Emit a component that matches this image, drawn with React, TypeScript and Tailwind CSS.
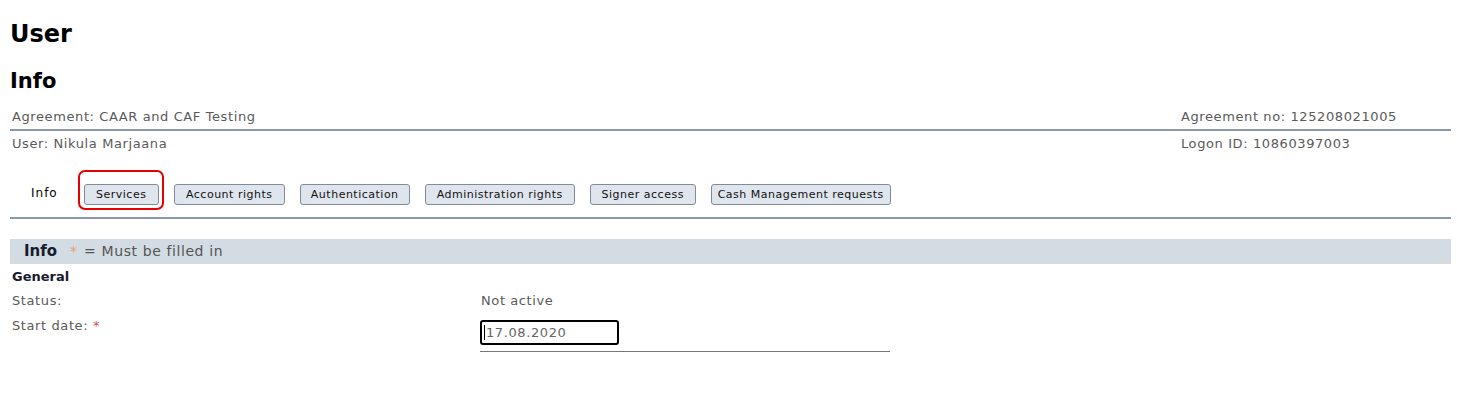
import React from "react";

const tabs = [
  { label: "Services", w: "w-[75px]" },
  { label: "Account rights", w: "w-[111px]" },
  { label: "Authentication", w: "w-[110px]" },
  { label: "Administration rights", w: "w-[150px]" },
  { label: "Signer access", w: "w-[106px]" },
  { label: "Cash Management requests", w: "w-[180px]" },
];

const App: React.FC = () => {
  return (
    <div className="w-[1457px] h-[398px] bg-white font-['DejaVu_Sans',Verdana,sans-serif] text-[#333]">
      <div className="pl-[10px] pr-[6px] pt-[19px]">
        <h1 className="text-[24px] font-bold text-black leading-[30px]">User</h1>
        <h2 className="mt-[19px] text-[21px] font-bold text-black leading-[26px]">Info</h2>

        {/* agreement rows */}
        <div className="mt-[15px] flex justify-between border-b-2 border-[#8a9aab] pb-[4px] pl-[2px] text-[13px] tracking-[0.6px] text-[#5a5a5a] leading-[16px]">
          <span>Agreement: CAAR and CAF Testing</span>
          <span className="w-[270px]">Agreement no: 125208021005</span>
        </div>
        <div className="mt-[5px] flex justify-between pl-[2px] text-[13px] tracking-[0.6px] text-[#5a5a5a] leading-[16px]">
          <span>User: Nikula Marjaana</span>
          <span className="w-[270px]">Logon ID: 10860397003</span>
        </div>

        {/* tabs */}
        <div className="mt-[29px] flex items-center border-b-2 border-[#8a9aab] pb-[12px] pl-[21px]">
          <span className="text-[12px] tracking-[1px] text-black mr-[26px]">Info</span>
          <div className="flex items-center gap-[15px]">
            {tabs.map((t, i) => (
              <div key={t.label} className="relative">
                <button
                  className={`${t.w} h-[21px] rounded-[3px] border border-[#7f8b99] bg-[#dfe5ec] text-[11px] tracking-[0.5px] text-[#111] leading-[19px] whitespace-nowrap`}
                >
                  {t.label}
                </button>
                {i === 0 && (
                  <div className="absolute -left-[6px] -top-[11px] w-[86px] h-[40px] rounded-[7px] border-2 border-[#e60000]" />
                )}
              </div>
            ))}
          </div>
        </div>

        {/* section bar */}
        <div className="mt-[20px] h-[25px] bg-[#d3dce3] flex items-center pl-[14px] text-[14px]">
          <span className="font-bold text-[#1a1a2e] text-[15px]">Info</span>
          <span className="ml-[13px] text-[#e8a070]">*</span>
          <span className="ml-[7px] text-[#555] tracking-[0.6px]">= Must be filled in</span>
        </div>

        <div className="pl-[2px]">
          <div className="mt-[4px] text-[13px] font-bold text-[#1a1a2e] leading-[18px]">General</div>
          <div className="mt-[7px] flex text-[13px] tracking-[0.6px] text-[#5a5a5a] leading-[16px]">
            <span className="w-[469px]">Status:</span>
            <span>Not active</span>
          </div>
          <div className="mt-[9px] flex items-start text-[13px] tracking-[0.6px] text-[#5a5a5a]">
            <span className="w-[468px] leading-[16px]">
              Start date: <span className="text-[#d9534f]">*</span>
            </span>
            <div className="w-[410px] border-b border-[#777] pb-[6px] mt-[2px]">
              <div className="w-[139px] h-[25px] rounded-[3px] border-2 border-black flex items-center pl-[2px] text-[#666]">
                <span className="border-l border-black pl-[1px] leading-[15px]">17.08.2020</span>
              </div>
            </div>
          </div>
        </div>
      </div>
    </div>
  );
};

export default App;
